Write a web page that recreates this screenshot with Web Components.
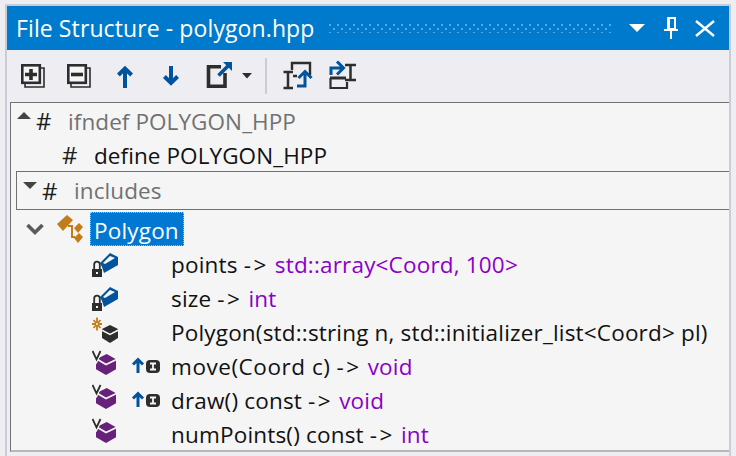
<!DOCTYPE html>
<html>
<head>
<meta charset="utf-8">
<style>
  html, body { margin: 0; padding: 0; background: #eeeef2; }
  body { font-family: "Open Sans", "Liberation Sans", sans-serif; }
  .wide { letter-spacing: .55px; }
</style>
</head>
<body>
<tool-window title="File Structure - polygon.hpp">
  <fs-tree>
    <fs-row style="--pad:6px" dim>
      <fs-glyph kind="open" slot="twisty"></fs-glyph>
      <span slot="hash">#</span>ifndef POLYGON_HPP
    </fs-row>
    <fs-row style="--pad:51px">
      <span slot="hash">#</span>define POLYGON_HPP
    </fs-row>
    <fs-row dim boxed>
      <fs-glyph kind="closed" slot="twisty"></fs-glyph>
      <span slot="hash">#</span>includes
    </fs-row>
    <fs-class-row>Polygon</fs-class-row>
    <fs-member icon="field">points <fs-arrow>-&gt;</fs-arrow> <fs-type>std::array&lt;Coord, 100&gt;</fs-type></fs-member>
    <fs-member icon="field">size <fs-arrow>-&gt;</fs-arrow> <fs-type>int</fs-type></fs-member>
    <fs-member icon="ctor">Polygon(std::string n, std::initializer_list&lt;Coord&gt; pl)</fs-member>
    <fs-member icon="virtual" inherited><span class="wide">move(Coord c)</span> <fs-arrow>-&gt;</fs-arrow> <fs-type>void</fs-type></fs-member>
    <fs-member icon="virtual" inherited>draw() const <fs-arrow>-&gt;</fs-arrow> <fs-type>void</fs-type></fs-member>
    <fs-member icon="virtual">numPoints() const <fs-arrow>-&gt;</fs-arrow> <fs-type>int</fs-type></fs-member>
  </fs-tree>
</tool-window>

<script>
const ICONS = {
  field: `<svg width="30" height="30" viewBox="0 0 30 30">
    <path d="M8 15 L18 5 L26 9 L26 17 L12 25 L10 19Z" fill="#00539c"/>
    <path d="M11 15 L18 8 L23 10 L13 16Z" fill="#f5f5f5"/>
    <rect x="0" y="21" width="10" height="8" fill="#2d2d2d"/>
    <path d="M2.200 21 V16.500 A2.800 2.800 0 0 1 7.800 16.500 V21" fill="#f5f5f5" stroke="#2d2d2d" stroke-width="1.800"/>
    <rect x="4" y="24" width="2" height="2" fill="#f5f5f5"/>
  </svg>`,
  ctor: `<svg width="30" height="30" viewBox="0 0 30 30">
    <g stroke="#c27d1a" stroke-width="1.800">
      <path d="M5 1.500 V14.500 M0 8 H10 M1.500 4 L8.500 12 M8.500 4 L1.500 12"/>
    </g>
    <circle cx="5" cy="8" r="2" fill="#c27d1a"/>
    <circle cx="5" cy="8" r="1" fill="#f5f5f5"/>
    <path d="M18 9 L26 13 L26 22 L18 27 L10 22 L10 13Z" fill="#2d2d2d"/>
    <path d="M9.500 14 L18 18.500 L26.500 14" fill="none" stroke="#f5f5f5" stroke-width="1.500"/>
  </svg>`,
  virtual: `<svg width="30" height="30" viewBox="0 0 30 30">
    <path d="M14.700 4 L24 9.300 L24 19.300 L14 25 L4 19.300 L4 9.300Z" fill="#68217a"/>
    <path d="M3 8 L14 14.500 L24.500 9.500" fill="none" stroke="#f5f5f5" stroke-width="1.800"/>
    <path d="M.5 1 L4.500 9.500 L8.500 1" fill="none" stroke="#f5f5f5" stroke-width="4"/>
    <path d="M.5 1 L4.500 9.500 L8.500 1" fill="none" stroke="#2d2d2d" stroke-width="1.800"/>
  </svg>`
};

class ToolWindow extends HTMLElement {
  constructor() {
    super()
    this.shadowDOM = this.attachShadow({mode: "open"})
    this.shadowDOM.innerHTML = `
    <style>
      :host { display: block; width: 736px; height: 456px; box-sizing: border-box; padding: 4px 5px 0 5px; overflow: hidden; }
      .frame { border: 2px solid #ccccd8; border-bottom: 0; height: 100%; box-sizing: border-box; display: flex; flex-direction: column; }
      .title { height: 44px; flex: none; background: #007acc; color: #fff; display: flex; align-items: center; padding: 0 0 0 9px; font-size: 23px; }
      .title span { white-space: pre; letter-spacing: .1px; }
      .grip { flex: 1; height: 10px; margin: 0 17px 0 15px; }
      .grip svg { display: block; }
      .toolbar { height: 52px; flex: none; display: flex; align-items: center; padding-left: 13px; }
      .toolbar svg { display: block; flex: none; }
      .sep { width: 2px; height: 36px; background: #ccccd8; margin: 0 15px 0 12px; }
      .body { flex: 1; padding: 0 0 0 3px; min-height: 0; }
    </style>
    <div class="frame">
      <div class="title">
        <span>${this.getAttribute("title")}</span>
        <div class="grip">
          <svg width="100%" height="10">
            <defs><pattern id="dots" width="8" height="8" patternUnits="userSpaceOnUse">
              <rect x="0" y="1" width="2" height="2" fill="#5aa6de"/>
              <rect x="4" y="5" width="2" height="2" fill="#5aa6de"/>
            </pattern></defs>
            <rect width="100%" height="10" fill="url(#dots)"/>
          </svg>
        </div>
        <svg width="100" height="30" viewBox="0 0 100 30" style="flex:none">
          <path d="M0 11 H16 L8 19Z" fill="#fff"/>
          <path d="M39 5 H46 V16 H39Z" fill="none" stroke="#fff" stroke-width="2"/>
          <path d="M39.500 5 V16" stroke="#fff" stroke-width="3"/>
          <path d="M35 17 H49 M42 17 V26" fill="none" stroke="#fff" stroke-width="2"/>
          <path d="M67 8 L85 23 M85 8 L67 23" stroke="#fff" stroke-width="2.400"/>
        </svg>
      </div>
      <div class="toolbar">
        <svg width="26" height="40" viewBox="0 0 26 40">
          <path d="M21 12 H24 V31 H5 V28" fill="none" stroke="#2d2d2d" stroke-width="1.600"/>
          <rect x="2.300" y="9.300" width="17.500" height="17.500" fill="#f6f6f6" stroke="#2d2d2d" stroke-width="2.600"/>
          <path d="M11 13 V24 M5 18.500 H17" stroke="#2d2d2d" stroke-width="3.600"/>
        </svg>
        <svg style="margin-left:20px" width="26" height="40" viewBox="0 0 26 40">
          <path d="M21 12 H24 V31 H5 V28" fill="none" stroke="#2d2d2d" stroke-width="1.600"/>
          <rect x="2.300" y="9.300" width="17.500" height="17.500" fill="#f6f6f6" stroke="#2d2d2d" stroke-width="2.600"/>
          <path d="M5 18.500 H17" stroke="#2d2d2d" stroke-width="3.600"/>
        </svg>
        <svg style="margin-left:23px" width="20" height="40" viewBox="0 0 20 40">
          <path d="M10 32 V13 M3.400 19 L10 12.500 L16.600 19" fill="none" stroke="#00539c" stroke-width="4"/>
        </svg>
        <svg style="margin-left:26px" width="20" height="40" viewBox="0 0 20 40">
          <path d="M10 10 V26 M3.400 20.500 L10 27 L16.600 20.500" fill="none" stroke="#00539c" stroke-width="4"/>
        </svg>
        <svg style="margin-left:25px" width="28" height="40" viewBox="0 0 28 40">
          <path d="M15 10.800 H2.500 V30.200 H19 V17" fill="none" stroke="#2d2d2d" stroke-width="3.600"/>
          <path d="M12.500 19.500 L22 10" fill="none" stroke="#00539c" stroke-width="3.600"/>
          <path d="M17 6 H26 V15Z" fill="#00539c"/>
        </svg>
        <svg style="margin-left:7px" width="12" height="40" viewBox="0 0 12 40">
          <path d="M1 17 H11 L6 22.500Z" fill="#2d2d2d"/>
        </svg>
        <div class="sep"></div>
        <svg width="32" height="40" viewBox="0 0 32 40">
          <path d="M10 14 V7 H28 V19 M11 20 H15" fill="none" stroke="#2d2d2d" stroke-width="2.400"/>
          <path d="M1.500 16 H11 M1.500 32 H11 M6 16 V32" fill="none" stroke="#2d2d2d" stroke-width="2.500"/>
          <path d="M23 30 V18 M16.500 22 L23 15.500 L29.500 22 M15 30 H24.500" fill="none" stroke="#00539c" stroke-width="3"/>
        </svg>
        <svg style="margin-left:13px" width="32" height="40" viewBox="0 0 32 40">
          <path d="M3 22 H19" fill="none" stroke="#2d2d2d" stroke-width="3"/>
          <path d="M3.500 22 V32 H20 V26" fill="none" stroke="#2d2d2d" stroke-width="2.200"/>
          <path d="M18 9 H29 M18 24 H29 M23.500 9 V24" fill="none" stroke="#2d2d2d" stroke-width="2.500"/>
          <path d="M4 19 V12 H15 M10 5.500 L16.500 12 L10 18.500" fill="none" stroke="#00539c" stroke-width="3"/>
        </svg>
      </div>
      <div class="body"><slot></slot></div>
    </div>
    `
  }
}

class FsTree extends HTMLElement {
  constructor() {
    super()
    this.shadowDOM = this.attachShadow({mode: "open"})
    this.shadowDOM.innerHTML = `
    <style>
      :host { display: block; height: 350px; box-sizing: border-box; background: #f5f5f5; border-top: 1px solid #717171; border-left: 1px solid #717171; border-bottom: 2px solid #b8b8b8; font-size: 22.500px; color: #111; letter-spacing: .18px; }
    </style>
    <slot></slot>
    `
  }
}

class FsGlyph extends HTMLElement {
  constructor() {
    super()
    this.shadowDOM = this.attachShadow({mode: "open"})
    const open = this.getAttribute("kind") == "open"
    this.shadowDOM.innerHTML = `
    <style>:host { display: block; width: 14px; height: 7px; } svg { display: block; }</style>
    <svg width="14" height="7" viewBox="0 0 14 7"><path d="${open ? "M0 7 L7 0 L14 7Z" : "M0 0 L14 0 L7 7Z"}" fill="#444"/></svg>
    `
  }
}

class FsRow extends HTMLElement {
  constructor() {
    super()
    this.shadowDOM = this.attachShadow({mode: "open"})
    const boxed = this.hasAttribute("boxed")
    this.shadowDOM.innerHTML = `
    <style>
      :host { display: block; letter-spacing: .08px; }
      .row { height: ${boxed ? 39 : 34}px; display: flex; align-items: center; box-sizing: border-box; padding-left: var(--pad, 0); padding-top: ${boxed ? 0 : 2}px; white-space: nowrap; }
      .dim { color: #717171; }
      .boxed { border: 1px solid #717171; border-right: 0; margin: 0 0 2px 5px; padding-left: 6px; }
      .tw { width: 19px; margin-top: ${boxed ? -10 : -11}px; flex: none; }
      .tw:not(.on) { display: none; }
      .hash { color: #1e1e1e; width: 32px; flex: none; font-size: 24px; line-height: 1; }
    </style>
    <div class="row ${this.hasAttribute("dim") ? "dim" : ""} ${boxed ? "boxed" : ""}">
      <div class="tw ${this.querySelector("[slot=twisty]") ? "on" : ""}"><slot name="twisty"></slot></div>
      <div class="hash"><slot name="hash"></slot></div>
      <div><slot></slot></div>
    </div>
    `
  }
}

class FsClassRow extends HTMLElement {
  constructor() {
    super()
    this.shadowDOM = this.attachShadow({mode: "open"})
    this.shadowDOM.innerHTML = `
    <style>
      :host { display: block; }
      .row { height: 34px; display: flex; align-items: center; padding-left: 15px; }
      .chev { flex: none; display: block; }
      .cls { flex: none; display: block; margin-left: 13px; }
      .sel { margin-left: 3px; height: 34px; box-sizing: border-box; width: 94px; background: #0078d2; color: #fff; outline: 1px dotted #9cc4e4; outline-offset: -1px; padding: 2px 0 0 4px; display: flex; align-items: center; }
    </style>
    <div class="row">
      <svg class="chev" width="18" height="14" viewBox="0 0 18 14"><path d="M1.500 3 L9 10.500 L16.500 3" fill="none" stroke="#5a5a5a" stroke-width="3.600"/></svg>
      <svg class="cls" width="30" height="30" viewBox="0 0 30 30">
        <path d="M0 10 L10 1 L16 6 L6 17Z" fill="#c27d1a"/>
        <path d="M17 14 L22 9 L26 13 L21 19Z M17 24 L22 19 L26 23 L21 29Z" fill="#c27d1a"/>
        <path d="M11 12 H15 V23 H18" fill="none" stroke="#c27d1a" stroke-width="2"/>
      </svg>
      <div class="sel"><slot></slot></div>
    </div>
    `
  }
}

class FsMember extends HTMLElement {
  constructor() {
    super()
    this.shadowDOM = this.attachShadow({mode: "open"})
    const inherited = this.hasAttribute("inherited")
    this.shadowDOM.innerHTML = `
    <style>
      :host { display: block; }
      .row { height: 34px; display: flex; align-items: center; padding-left: 81px; white-space: nowrap; }
      .icon { width: 39px; flex: none; height: 30px; }
      .extra { width: 40px; flex: none; height: 20px; }
      .text { padding-top: 2px; }
      svg { display: block; }
    </style>
    <div class="row">
      <div class="icon">${ICONS[this.getAttribute("icon")]}</div>
      <div class="extra">${inherited ? `<svg width="30" height="20" viewBox="0 0 30 20">
        <path d="M7 18 V6 M2 9.500 L7 4.500 L12 9.500" fill="none" stroke="#00539c" stroke-width="3"/>
        <rect x="15" y="5" width="14" height="13" rx="4" fill="#2d2d2d"/>
        <path d="M19 8.500 H25 M19 14.500 H25 M22 8.500 V14.500" stroke="#f5f5f5" stroke-width="1.800"/>
      </svg>` : ""}</div>
      <div class="text"><slot></slot></div>
    </div>
    `
  }
}

class FsArrow extends HTMLElement {
  constructor() {
    super()
    this.shadowDOM = this.attachShadow({mode: "open"})
    this.shadowDOM.innerHTML = `<style>:host { display: inline; letter-spacing: 2.500px; }</style><slot></slot>`
  }
}

class FsType extends HTMLElement {
  constructor() {
    super()
    this.shadowDOM = this.attachShadow({mode: "open"})
    this.shadowDOM.innerHTML = `<style>:host { display: inline; color: #8a00c8; }</style><slot></slot>`
  }
}

customElements.define("tool-window", ToolWindow)
customElements.define("fs-tree", FsTree)
customElements.define("fs-glyph", FsGlyph)
customElements.define("fs-row", FsRow)
customElements.define("fs-class-row", FsClassRow)
customElements.define("fs-member", FsMember)
customElements.define("fs-arrow", FsArrow)
customElements.define("fs-type", FsType)
</script>
</body>
</html>
